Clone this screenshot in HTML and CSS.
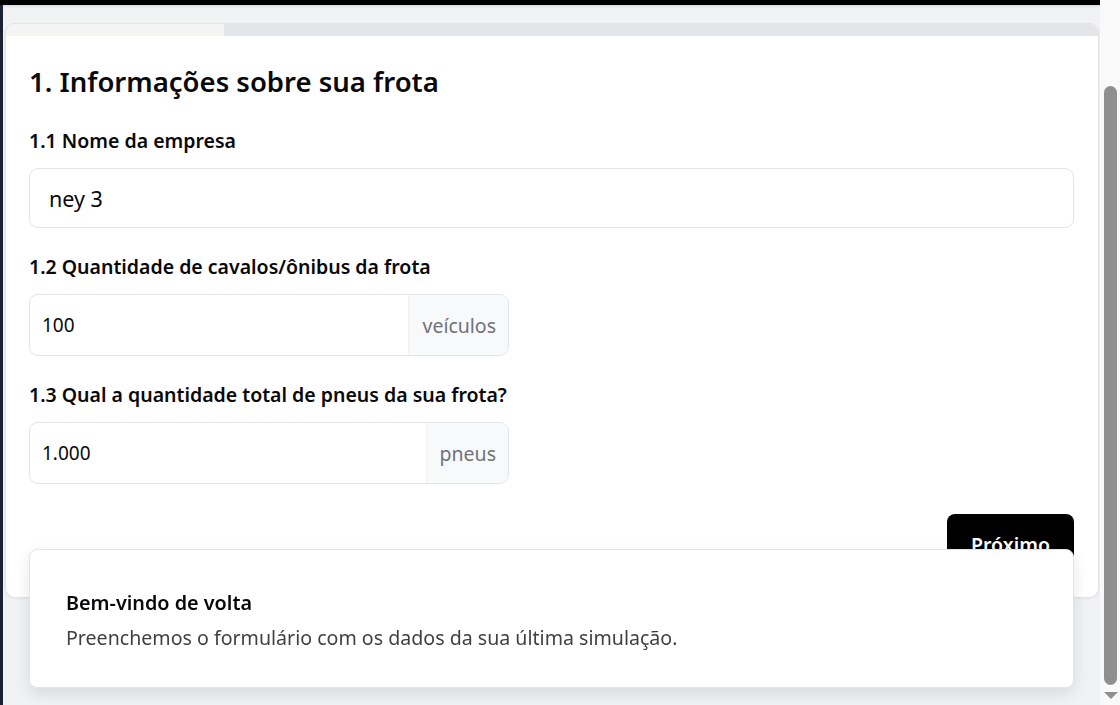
FILE: index.html
```html
<!DOCTYPE html>
<html lang="pt-BR">
<head>
<meta charset="utf-8">
<title>Simulação</title>
<link rel="stylesheet" href="styles.css">
</head>
<body>
<div class="window">
  <div class="app">
    <div class="topbar"></div>
    <div class="app-row">
      <div class="edge"></div>
      <main class="content">
        <section class="card">
          <div class="progress"><div class="progress-fill" style="width: 20%"></div></div>
          <form class="card-body">
            <h1 class="title">1. Informações sobre sua frota</h1>
            <div class="field">
              <label class="label">1.1 Nome da empresa</label>
              <div class="input input-wide"><span class="value value-lg">ney 3</span></div>
            </div>
            <div class="field">
              <label class="label">1.2 Quantidade de cavalos/ônibus da frota</label>
              <div class="input input-group">
                <span class="value">100</span>
                <span class="suffix">veículos</span>
              </div>
            </div>
            <div class="field">
              <label class="label">1.3 Qual a quantidade total de pneus da sua frota?</label>
              <div class="input input-group">
                <span class="value">1.000</span>
                <span class="suffix">pneus</span>
              </div>
            </div>
            <div class="actions">
              <button type="button" class="btn">Próximo</button>
            </div>
          </form>
        </section>
      </main>
    </div>
  </div>
  <div class="scrollbar">
    <div class="scroll-thumb"></div>
    <div class="scroll-arrow"></div>
  </div>
</div>
<div class="toast">
  <div class="toast-title">Bem-vindo de volta</div>
  <div class="toast-desc">Preenchemos o formulário com os dados da sua última simulação.</div>
</div>
</body>
</html>
```
FILE: styles.css
```css
* { box-sizing: border-box; }
html, body { margin: 0; padding: 0; height: 100%; }
body {
  font-family: "Noto Sans", "Open Sans", sans-serif;
  color: #09090b;
  background: #f1f2f4;
  overflow: hidden;
}
.window {
  display: flex;
  height: 705px;
}
.app {
  width: 1100px;
  display: flex;
  flex-direction: column;
}
.topbar {
  height: 5px;
  background: #000;
  box-shadow: 0 1px 3px rgba(0,0,0,0.12);
}
.app-row {
  flex: 1;
  display: flex;
}
.edge {
  width: 3px;
  background: #1c2333;
}
.content {
  flex: 1;
  padding: 18px 1px 0 2px;
}
.card {
  background: #fff;
  border: 1px solid #e4e4e7;
  border-radius: 10px;
  overflow: hidden;
  box-shadow: 0 1px 3px rgba(0,0,0,0.06);
}
.progress {
  height: 12px;
  background: #e4e5e8;
}
.progress-fill {
  height: 100%;
  background: #f4f4f3;
}
.card-body {
  padding: 28px 24px 27px 23px;
  margin: 0;
}
.title {
  margin: 0 0 28px;
  font-size: 27.5px;
  line-height: 36px;
  font-weight: 600;
}
.field {
  margin-bottom: 26px;
}
.label {
  display: block;
  font-size: 19.5px;
  line-height: 26px;
  font-weight: 600;
  margin-bottom: 14px;
}
.input {
  display: flex;
  align-items: center;
  border: 1px solid #e4e4e7;
  border-radius: 9px;
  background: #fff;
  overflow: hidden;
}
.input-wide {
  height: 60px;
  padding-left: 19px;
}
.input-group {
  width: 480px;
  height: 62px;
}
.value {
  flex: 1;
  font-size: 19px;
  padding-left: 12px;
}
.value-lg {
  font-size: 21.5px;
  padding-left: 0;
}
.suffix {
  align-self: stretch;
  display: flex;
  align-items: center;
  padding: 0 12px 0 13px;
  background: #f8f9fa;
  color: #71717a;
  font-size: 19.5px;
  border-left: 1px solid #f1f1f3;
}
.actions {
  display: flex;
  justify-content: flex-end;
  padding-top: 4px;
}
.btn {
  font-family: inherit;
  font-size: 19.5px;
  font-weight: 600;
  color: #fff;
  background: #000;
  border: 0;
  border-radius: 8px;
  height: 56px;
  width: 127px;
  padding-top: 5px;
  cursor: pointer;
}
.scrollbar {
  width: 20px;
  background: #f9f9f9;
  display: flex;
  flex-direction: column;
  align-items: center;
  padding: 86px 0 2px 1px;
}
.scroll-thumb {
  width: 13px;
  flex: 1;
  max-height: 599px;
  background: #8f8f8f;
  border-radius: 7px;
}
.scroll-arrow {
  margin-top: 7px;
  width: 0;
  height: 0;
  border-left: 7px solid transparent;
  border-right: 7px solid transparent;
  border-top: 7px solid #8f8f8f;
}
.toast {
  position: fixed;
  left: 29px;
  top: 549px;
  width: 1045px;
  height: 139px;
  background: #fff;
  border: 1px solid #e4e4e7;
  border-radius: 8px;
  box-shadow: 0 6px 16px rgba(0,0,0,0.10);
  padding: 40px 36px 0;
}
.toast-title {
  font-size: 19.8px;
  line-height: 26px;
  font-weight: 600;
  color: #09090b;
}
.toast-desc {
  margin-top: 9px;
  font-size: 19.6px;
  line-height: 26px;
  color: #3f3f46;
}
```
